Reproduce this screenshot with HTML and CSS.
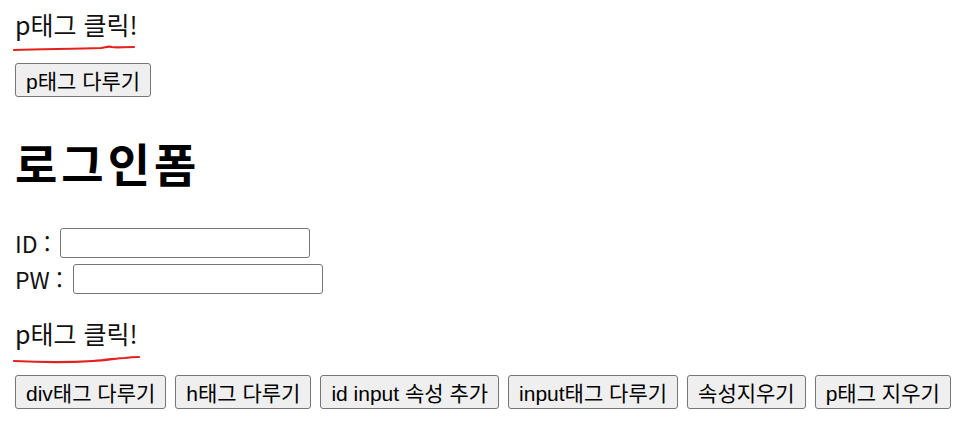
FILE: index.html
```html
<!DOCTYPE html>
<html lang="ko">
<head>
    <meta charset="UTF-8">
    <meta name="viewport" content="width=device-width, initial-scale=1.0">
    <title>로그인폼</title>
    <link rel="stylesheet" href="styles.css">
</head>
<body>
    <div class="page">
        <p class="note note-top">
            <span class="note-text">p태그 클릭!</span>
            <svg class="scribble" width="130" height="10" viewBox="0 0 130 10">
                <path d="M1 6 C 30 5, 60 5, 88 4 C 94 3, 96 2, 99 3 C 103 4, 110 3, 121 3" fill="none" stroke="#e3221d" stroke-width="2.2" stroke-linecap="round"/>
            </svg>
        </p>
        <div class="btn-row btn-row-top">
            <button>p태그 다루기</button>
        </div>

        <h1 class="title">로그인폼</h1>

        <form class="login">
            <div class="field">
                <label for="id">ID :</label>
                <input type="text" id="id">
            </div>
            <div class="field">
                <label for="pw">PW :</label>
                <input type="text" id="pw">
            </div>
        </form>

        <p class="note note-bottom">
            <span class="note-text">p태그 클릭!</span>
            <svg class="scribble" width="130" height="10" viewBox="0 0 130 10">
                <path d="M1 7 C 20 8, 50 9, 80 7 C 95 6, 105 4, 112 4 C 118 3, 122 3, 126 3" fill="none" stroke="#e3221d" stroke-width="2.2" stroke-linecap="round"/>
            </svg>
        </p>
        <div class="btn-row btn-row-bottom">
            <button>div태그 다루기</button>
            <button>h태그 다루기</button>
            <button>id input 속성 추가</button>
            <button>input태그 다루기</button>
            <button>속성지우기</button>
            <button>p태그 지우기</button>
        </div>
    </div>
</body>
</html>
```

FILE: styles.css
```css
body {
    margin: 0;
    background: #ffffff;
    color: #000000;
    font-family: "Noto Sans CJK KR", "Noto Sans", sans-serif;
}
.page {
    display: flex;
    flex-direction: column;
    align-items: flex-start;
    padding-left: 15px;
}
.note {
    position: relative;
    margin: 0;
    font-size: 25px;
    line-height: 32px;
    color: #111111;
}
.note-top {
    margin-top: 8px;
}
.note-bottom {
    margin-top: 23px;
}
.scribble {
    position: absolute;
    left: -2px;
    top: 36px;
}
.note-bottom .scribble {
    top: 37px;
}
.btn-row {
    display: flex;
    gap: 9px;
}
.btn-row-top {
    margin-top: 23px;
}
.btn-row-bottom {
    margin-top: 26px;
}
button {
    height: 34px;
    padding: 0 10px;
    border: 1px solid #767676;
    border-radius: 3px;
    background-color: #efefef;
    font-family: "Liberation Sans", "Noto Sans CJK KR", sans-serif;
    font-size: 21px;
    color: #000000;
}
.title {
    margin: 37px 0 0;
    font-size: 46px;
    line-height: 56px;
    font-weight: 700;
    letter-spacing: 4px;
}
.login {
    margin-top: 38px;
    display: flex;
    flex-direction: column;
    gap: 6px;
}
.field {
    display: flex;
    align-items: center;
    gap: 10px;
    height: 30px;
    font-size: 23px;
    line-height: 30px;
    color: #111111;
}
.field input {
    width: 250px;
    height: 30px;
    box-sizing: border-box;
    border: 1px solid #767676;
    border-radius: 3px;
    background: #ffffff;
}
```
